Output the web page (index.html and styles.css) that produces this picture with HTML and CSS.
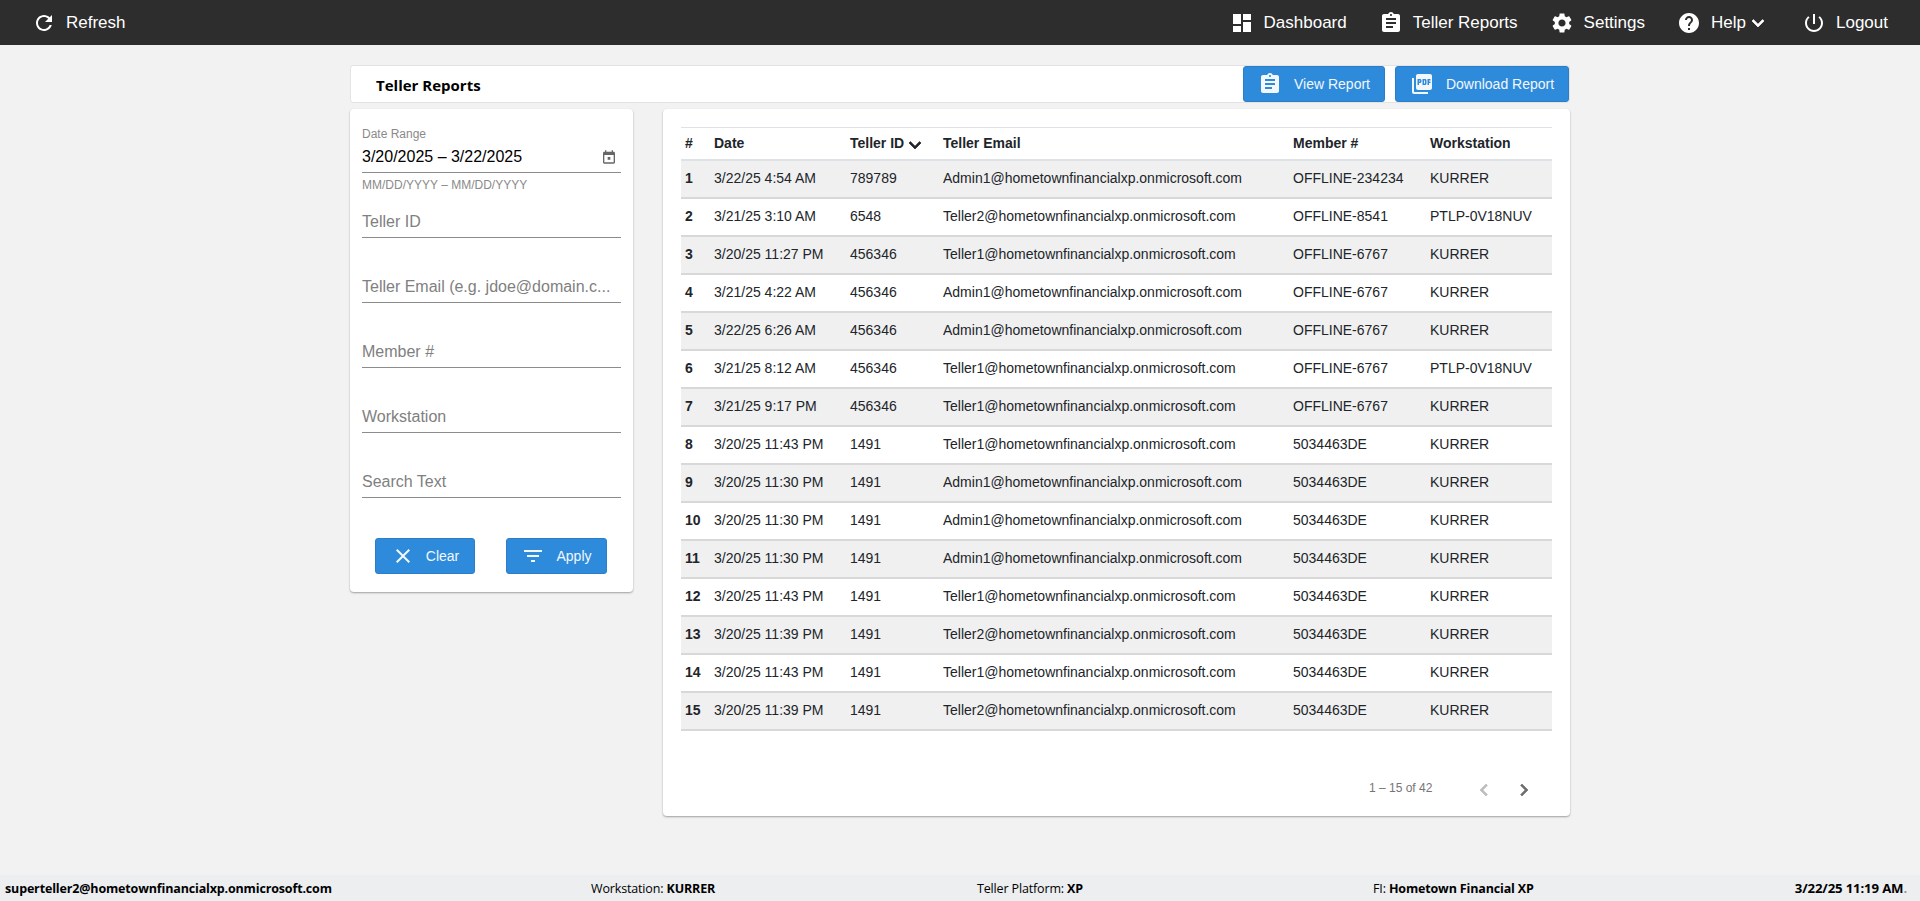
FILE: index.html
```html
<!DOCTYPE html>
<html lang="en">
<head>
  <meta charset="UTF-8">
  <meta name="viewport" content="width=device-width, initial-scale=1.0">
  <title>Teller Reports</title>
  <link rel="stylesheet" href="styles.css">
</head>
<body>
  <svg class="icon-defs" xmlns="http://www.w3.org/2000/svg">
    <symbol id="i-refresh" viewBox="0 0 24 24"><path d="M17.65 6.35C16.2 4.9 14.21 4 12 4c-4.42 0-7.99 3.58-7.99 8s3.57 8 7.99 8c3.73 0 6.84-2.55 7.73-6h-2.08c-.82 2.33-3.04 4-5.65 4-3.31 0-6-2.69-6-6s2.69-6 6-6c1.66 0 3.14.69 4.22 1.78L13 11h7V4l-2.35 2.35z"/></symbol>
    <symbol id="i-dashboard" viewBox="0 0 24 24"><path d="M3 13h8V3H3v10zm0 8h8v-6H3v6zm10 0h8V11h-8v10zm0-18v6h8V3h-8z"/></symbol>
    <symbol id="i-assignment" viewBox="0 0 24 24"><path d="M19 3h-4.18C14.4 1.84 13.3 1 12 1c-1.3 0-2.4.84-2.82 2H5c-1.1 0-2 .9-2 2v14c0 1.1.9 2 2 2h14c1.1 0 2-.9 2-2V5c0-1.1-.9-2-2-2zm-7 0c.55 0 1 .45 1 1s-.45 1-1 1-1-.45-1-1 .45-1 1-1zm2 14H7v-2h7v2zm3-4H7v-2h10v2zm0-4H7V7h10v2z"/></symbol>
    <symbol id="i-settings" viewBox="0 0 24 24"><path d="M19.14 12.94c.04-.3.06-.61.06-.94 0-.32-.02-.64-.07-.94l2.03-1.58c.18-.14.23-.41.12-.61l-1.92-3.32c-.12-.22-.37-.29-.59-.22l-2.39.96c-.5-.38-1.03-.7-1.62-.94l-.36-2.54c-.04-.24-.24-.41-.48-.41h-3.84c-.24 0-.43.17-.47.41l-.36 2.54c-.59.24-1.13.57-1.62.94l-2.39-.96c-.22-.08-.47 0-.59.22L2.74 8.87c-.12.21-.08.47.12.61l2.03 1.58c-.05.3-.09.63-.09.94s.02.64.07.94l-2.03 1.58c-.18.14-.23.41-.12.61l1.92 3.32c.12.22.37.29.59.22l2.39-.96c.5.38 1.03.7 1.62.94l.36 2.54c.05.24.24.41.48.41h3.84c.24 0 .44-.17.47-.41l.36-2.54c.59-.24 1.13-.56 1.62-.94l2.39.96c.22.08.47 0 .59-.22l1.92-3.32c.12-.22.07-.47-.12-.61l-2.01-1.58zM12 15.6c-1.98 0-3.6-1.62-3.6-3.6s1.62-3.6 3.6-3.6 3.6 1.62 3.6 3.6-1.62 3.6-3.6 3.6z"/></symbol>
    <symbol id="i-help" viewBox="0 0 24 24"><path d="M12 2C6.48 2 2 6.48 2 12s4.48 10 10 10 10-4.48 10-10S17.52 2 12 2zm1 17h-2v-2h2v2zm2.07-7.75l-.9.92C13.45 12.9 13 13.5 13 15h-2v-.5c0-1.1.45-2.1 1.17-2.83l1.24-1.26c.37-.36.59-.86.59-1.41 0-1.1-.9-2-2-2s-2 .9-2 2H8c0-2.21 1.79-4 4-4s4 1.79 4 4c0 .88-.36 1.68-.93 2.25z"/></symbol>
    <symbol id="i-power" viewBox="0 0 24 24"><path d="M13 3h-2v10h2V3zm4.83 2.17l-1.42 1.42C17.99 7.86 19 9.81 19 12c0 3.87-3.13 7-7 7s-7-3.13-7-7c0-2.19 1.01-4.14 2.58-5.42L6.17 5.17C4.23 6.82 3 9.26 3 12c0 4.97 4.03 9 9 9s9-4.03 9-9c0-2.74-1.23-5.18-3.17-6.83z"/></symbol>
    <symbol id="i-expand" viewBox="0 0 24 24"><path d="M16.59 8.59L12 13.17 7.41 8.59 6 10l6 6 6-6z"/></symbol>
    <symbol id="i-pdf" viewBox="0 0 24 24"><path d="M20 2H8c-1.1 0-2 .9-2 2v12c0 1.1.9 2 2 2h12c1.1 0 2-.9 2-2V4c0-1.1-.9-2-2-2zm-8.5 7.5c0 .83-.67 1.5-1.5 1.5H9v2H7.5V7H10c.83 0 1.5.67 1.5 1.5v1zm5 2c0 .83-.67 1.5-1.5 1.5h-2.5V7H15c.83 0 1.5.67 1.5 1.5v3zm4-3H19v1h1.5V11H19v2h-1.5V7h3v1.5zM9 9.5h1v-1H9v1zM4 6H2v14c0 1.1.9 2 2 2h14v-2H4V6zm10 5.5h1v-3h-1v3z"/></symbol>
    <symbol id="i-close" viewBox="0 0 24 24"><path d="M19 6.41L17.59 5 12 10.59 6.41 5 5 6.41 10.59 12 5 17.59 6.41 19 12 13.41 17.59 19 19 17.59 13.41 12z"/></symbol>
    <symbol id="i-filter" viewBox="0 0 24 24"><path d="M10 18h4v-2h-4v2zM3 6v2h18V6H3zm3 7h12v-2H6v2z"/></symbol>
    <symbol id="i-calendar" viewBox="0 0 24 24"><path d="M19 4h-1V2h-2v2H8V2H6v2H5c-1.11 0-2 .9-2 2v14c0 1.1.89 2 2 2h14c1.1 0 2-.9 2-2V6c0-1.1-.9-2-2-2zm0 16H5V9h14v11zm-9-8h4v4h-4z"/></symbol>
    <symbol id="i-prev" viewBox="0 0 24 24"><path d="M15.41 7.41L14 6l-6 6 6 6 1.41-1.41L10.83 12z"/></symbol>
    <symbol id="i-next" viewBox="0 0 24 24"><path d="M10 6L8.59 7.41 13.17 12l-4.58 4.59L10 18l6-6z"/></symbol>
  </svg>

  <header class="topbar">
    <a class="nav-item"><svg class="nav-icon"><use href="#i-refresh"/></svg>Refresh</a>
    <nav class="nav-right">
      <a class="nav-item"><svg class="nav-icon"><use href="#i-dashboard"/></svg>Dashboard</a>
      <a class="nav-item"><svg class="nav-icon"><use href="#i-assignment"/></svg>Teller Reports</a>
      <a class="nav-item"><svg class="nav-icon"><use href="#i-settings"/></svg>Settings</a>
      <a class="nav-item"><svg class="nav-icon"><use href="#i-help"/></svg>Help<svg class="nav-caret"><use href="#i-expand"/></svg></a>
      <a class="nav-item"><svg class="nav-icon"><use href="#i-power"/></svg>Logout</a>
    </nav>
  </header>

  <main class="content">
    <div class="title-bar">
      <h1>Teller Reports</h1>
      <div class="title-actions">
        <button class="btn btn-view"><svg class="btn-icon"><use href="#i-assignment"/></svg>View Report</button>
        <button class="btn btn-download"><svg class="btn-icon"><use href="#i-pdf"/></svg>Download Report</button>
      </div>
    </div>

    <div class="columns">
      <form class="card filters">
        <div class="date-field">
          <label>Date Range</label>
          <div class="date-value">
            <span>3/20/2025 – 3/22/2025</span>
            <svg class="date-icon"><use href="#i-calendar"/></svg>
          </div>
          <div class="date-hint">MM/DD/YYYY – MM/DD/YYYY</div>
        </div>
        <div class="field">Teller ID</div>
        <div class="field">Teller Email (e.g. jdoe@domain.c...</div>
        <div class="field">Member #</div>
        <div class="field">Workstation</div>
        <div class="field">Search Text</div>
        <div class="filter-actions">
          <button type="button" class="btn btn-clear"><svg class="btn-icon"><use href="#i-close"/></svg>Clear</button>
          <button type="button" class="btn btn-apply"><svg class="btn-icon"><use href="#i-filter"/></svg>Apply</button>
        </div>
      </form>

      <section class="card results">
        <table class="report-table">
          <thead>
            <tr>
              <th class="col-num">#</th>
              <th class="col-date">Date</th>
              <th class="col-id">Teller ID<svg class="sort-icon"><use href="#i-expand"/></svg></th>
              <th class="col-email">Teller Email</th>
              <th class="col-member">Member #</th>
              <th class="col-ws">Workstation</th>
            </tr>
          </thead>
          <tbody>
            <tr><td>1</td><td>3/22/25 4:54 AM</td><td>789789</td><td>Admin1@hometownfinancialxp.onmicrosoft.com</td><td>OFFLINE-234234</td><td>KURRER</td></tr>
            <tr><td>2</td><td>3/21/25 3:10 AM</td><td>6548</td><td>Teller2@hometownfinancialxp.onmicrosoft.com</td><td>OFFLINE-8541</td><td>PTLP-0V18NUV</td></tr>
            <tr><td>3</td><td>3/20/25 11:27 PM</td><td>456346</td><td>Teller1@hometownfinancialxp.onmicrosoft.com</td><td>OFFLINE-6767</td><td>KURRER</td></tr>
            <tr><td>4</td><td>3/21/25 4:22 AM</td><td>456346</td><td>Admin1@hometownfinancialxp.onmicrosoft.com</td><td>OFFLINE-6767</td><td>KURRER</td></tr>
            <tr><td>5</td><td>3/22/25 6:26 AM</td><td>456346</td><td>Admin1@hometownfinancialxp.onmicrosoft.com</td><td>OFFLINE-6767</td><td>KURRER</td></tr>
            <tr><td>6</td><td>3/21/25 8:12 AM</td><td>456346</td><td>Teller1@hometownfinancialxp.onmicrosoft.com</td><td>OFFLINE-6767</td><td>PTLP-0V18NUV</td></tr>
            <tr><td>7</td><td>3/21/25 9:17 PM</td><td>456346</td><td>Teller1@hometownfinancialxp.onmicrosoft.com</td><td>OFFLINE-6767</td><td>KURRER</td></tr>
            <tr><td>8</td><td>3/20/25 11:43 PM</td><td>1491</td><td>Teller1@hometownfinancialxp.onmicrosoft.com</td><td>5034463DE</td><td>KURRER</td></tr>
            <tr><td>9</td><td>3/20/25 11:30 PM</td><td>1491</td><td>Admin1@hometownfinancialxp.onmicrosoft.com</td><td>5034463DE</td><td>KURRER</td></tr>
            <tr><td>10</td><td>3/20/25 11:30 PM</td><td>1491</td><td>Admin1@hometownfinancialxp.onmicrosoft.com</td><td>5034463DE</td><td>KURRER</td></tr>
            <tr><td>11</td><td>3/20/25 11:30 PM</td><td>1491</td><td>Admin1@hometownfinancialxp.onmicrosoft.com</td><td>5034463DE</td><td>KURRER</td></tr>
            <tr><td>12</td><td>3/20/25 11:43 PM</td><td>1491</td><td>Teller1@hometownfinancialxp.onmicrosoft.com</td><td>5034463DE</td><td>KURRER</td></tr>
            <tr><td>13</td><td>3/20/25 11:39 PM</td><td>1491</td><td>Teller2@hometownfinancialxp.onmicrosoft.com</td><td>5034463DE</td><td>KURRER</td></tr>
            <tr><td>14</td><td>3/20/25 11:43 PM</td><td>1491</td><td>Teller1@hometownfinancialxp.onmicrosoft.com</td><td>5034463DE</td><td>KURRER</td></tr>
            <tr><td>15</td><td>3/20/25 11:39 PM</td><td>1491</td><td>Teller2@hometownfinancialxp.onmicrosoft.com</td><td>5034463DE</td><td>KURRER</td></tr>
          </tbody>
        </table>
        <div class="pager">
          <span class="pager-range">1 – 15 of 42</span>
          <svg class="pager-btn disabled"><use href="#i-prev"/></svg>
          <svg class="pager-btn"><use href="#i-next"/></svg>
        </div>
      </section>
    </div>
  </main>

  <footer class="statusbar">
    <strong>superteller2@hometownfinancialxp.onmicrosoft.com</strong>
    <span>Workstation: <strong>KURRER</strong></span>
    <span>Teller Platform: <strong>XP</strong></span>
    <span>FI: <strong>Hometown Financial XP</strong></span>
    <strong class="status-time">3/22/25 11:19 AM<span class="faint">.</span></strong>
  </footer>
</body>
</html>
```

FILE: styles.css
```css
* {
  box-sizing: border-box;
}

html, body {
  height: 100%;
}

body {
  margin: 0;
  display: flex;
  flex-direction: column;
  background-color: #f2f2f2;
  color: #212529;
  font-family: "Liberation Sans", Arial, sans-serif;
  font-size: 14px;
}

.icon-defs {
  display: none;
}

/* top bar */
.topbar {
  height: 45px;
  flex-shrink: 0;
  display: flex;
  justify-content: space-between;
  align-items: center;
  padding: 0 32px;
  background-color: #2d2d2d;
  color: #fff;
  font-size: 17px;
}

.nav-right {
  display: flex;
  gap: 32px;
}

.nav-item {
  display: flex;
  align-items: center;
}

.nav-icon {
  width: 24px;
  height: 24px;
  margin-right: 10px;
  fill: #fff;
}

.nav-caret {
  width: 24px;
  height: 24px;
  fill: #fff;
  stroke: #fff;
  stroke-width: 0.7;
}

/* main area */
.content {
  width: 1220px;
  margin: 20px auto 0;
  flex: 1;
}

.title-bar {
  height: 38px;
  display: flex;
  justify-content: space-between;
  align-items: center;
  padding: 0 0 0 25px;
  background-color: #fff;
  border: 1px solid #e3e3e3;
  border-radius: 3px;
}

h1 {
  margin: 1px 0 0;
  color: #000;
  font-family: "Open Sans", sans-serif;
  font-size: 15px;
  font-weight: 700;
}

.title-actions {
  display: flex;
  gap: 10px;
}

.btn {
  display: flex;
  align-items: center;
  justify-content: center;
  border: 1px solid #2a7fc8;
  border-radius: 3px;
  background-color: #2e8bdb;
  color: #f2f7fc;
  font-family: inherit;
  font-size: 14px;
  cursor: pointer;
}

.btn-icon {
  width: 24px;
  height: 24px;
  margin-right: 12px;
  fill: #f2f7fc;
}

.btn-view {
  width: 142px;
  height: 36px;
}

.btn-download {
  width: 174px;
  height: 36px;
}

.btn-clear {
  width: 100px;
  height: 36px;
}

.btn-apply {
  width: 101px;
  height: 36px;
}

.filter-actions .btn-icon {
  margin-right: 11px;
}

.columns {
  display: grid;
  grid-template-columns: 283px 907px;
  gap: 30px;
  align-items: start;
  margin-top: 6px;
}

.card {
  background-color: #fff;
  border-radius: 4px;
  box-shadow: 0 1px 2px rgba(0, 0, 0, 0.35);
}

/* filter form */
.filters {
  height: 483px;
  padding: 18px 12px 0;
}

.date-field {
  height: 66px;
}

.date-field label {
  display: block;
  height: 15px;
  color: #8a8a8a;
  font-size: 12px;
  line-height: 15px;
}

.date-value {
  display: flex;
  justify-content: space-between;
  align-items: center;
  height: 31px;
  border-bottom: 1px solid #8c8c8c;
  color: #000;
  font-size: 16px;
}

.date-icon {
  width: 16px;
  height: 16px;
  margin-right: 4px;
  fill: #666;
}

.date-hint {
  margin-top: 5px;
  color: #8a8a8a;
  font-size: 12px;
  line-height: 14px;
}

.field {
  height: 33px;
  margin-top: 32px;
  border-bottom: 1px solid #8c8c8c;
  color: #808080;
  font-size: 16px;
  line-height: 33px;
  white-space: nowrap;
}

.date-field + .field {
  margin-top: 12px;
}

.filter-actions {
  display: flex;
  justify-content: space-between;
  padding: 0 14px 0 13px;
  margin-top: 40px;
}

/* results table */
.results {
  height: 707px;
  padding: 18px 18px 0;
}

.report-table {
  width: 871px;
  border-collapse: collapse;
  table-layout: fixed;
  border-top: 1px solid #dee2e6;
}

.col-num { width: 29px; }
.col-date { width: 136px; }
.col-id { width: 93px; }
.col-email { width: 350px; }
.col-member { width: 137px; }
.col-ws { width: 126px; }

th {
  height: 32px;
  padding: 0 4px;
  border-bottom: 2px solid #dee2e6;
  color: #212529;
  font-size: 14px;
  font-weight: 700;
  text-align: left;
  white-space: nowrap;
}

.sort-icon {
  width: 24px;
  height: 24px;
  margin: -7px 0 -7px -1px;
  vertical-align: middle;
  fill: #212529;
  stroke: #212529;
  stroke-width: 0.7;
}

td {
  height: 38px;
  padding: 0 4px 2px;
  border-bottom: 2px solid #d8d8d8;
  white-space: nowrap;
}

td:first-child {
  font-weight: 700;
}

tbody tr:nth-child(odd) {
  background-color: #f0f0f0;
}

.pager {
  display: flex;
  align-items: center;
  margin-top: 43px;
  padding-left: 688px;
}

.pager-range {
  width: 103px;
  color: #757575;
  font-size: 12px;
}

.pager-btn {
  width: 24px;
  height: 24px;
  margin: 4px 16px 0 0;
  fill: #707070;
  stroke: #707070;
  stroke-width: 0.7;
}

.pager-btn.disabled {
  fill: #bdbdbd;
  stroke: #bdbdbd;
}

/* status bar */
.statusbar {
  height: 26px;
  flex-shrink: 0;
  display: grid;
  grid-template-columns: 586px 386px 396px 1fr auto;
  align-items: center;
  padding: 0 13px 0 5px;
  background-color: #eceef0;
  color: #000;
  font-family: "Open Sans", sans-serif;
  font-size: 12.5px;
  letter-spacing: -0.15px;
}

.status-time {
  font-size: 13.2px;
}

.faint {
  color: #999;
}
```
